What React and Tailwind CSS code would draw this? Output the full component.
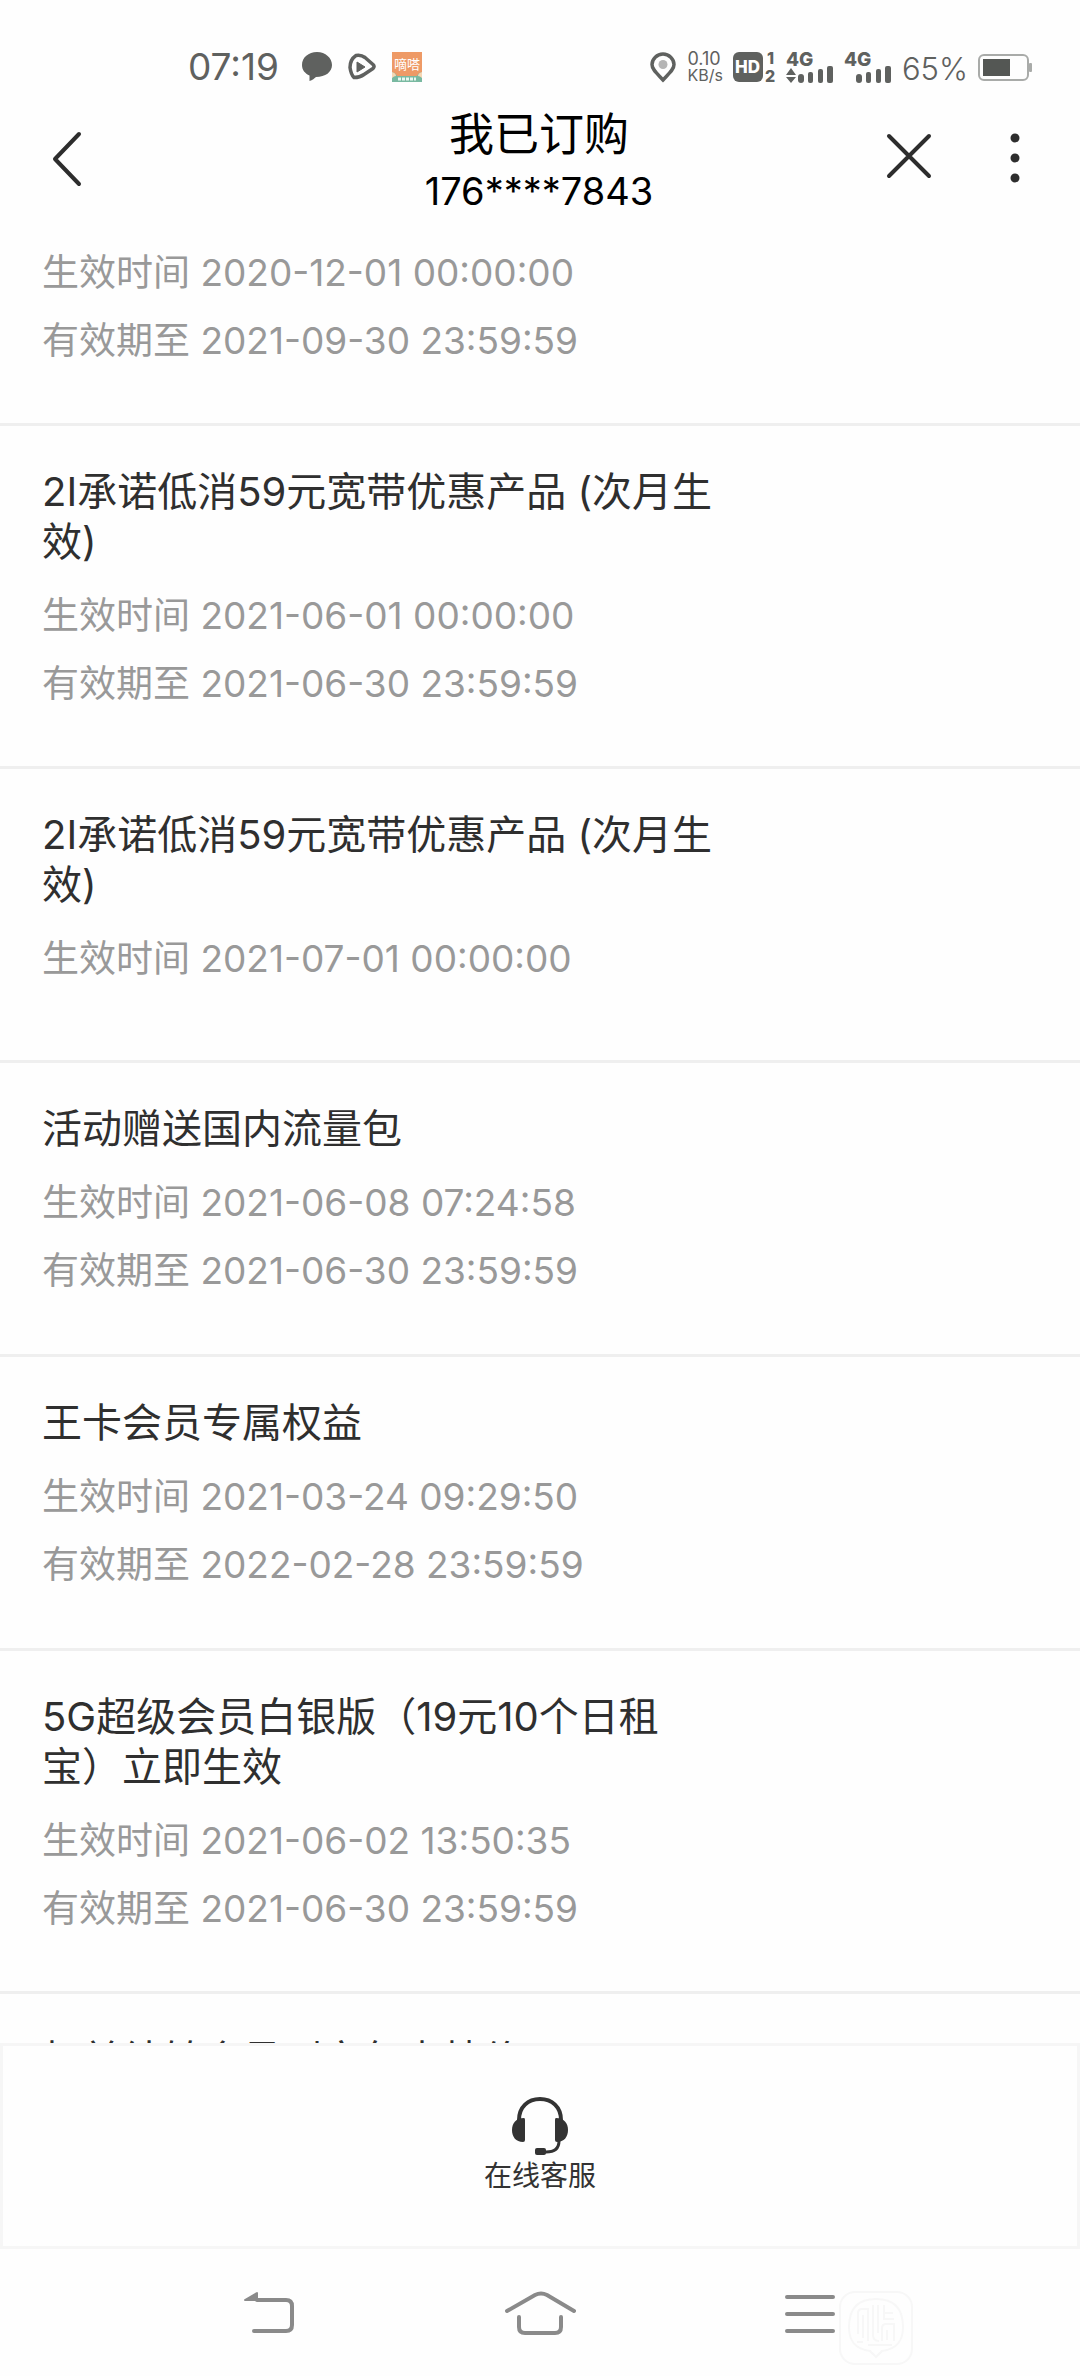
const orders = [
  { start: '2020-12-01 00:00:00', end: '2021-09-30 23:59:59' },
  { title: '2I承诺低消59元宽带优惠产品 (次月生效)', start: '2021-06-01 00:00:00', end: '2021-06-30 23:59:59' },
  { title: '2I承诺低消59元宽带优惠产品 (次月生效)', start: '2021-07-01 00:00:00' },
  { title: '活动赠送国内流量包', start: '2021-06-08 07:24:58', end: '2021-06-30 23:59:59' },
  { title: '王卡会员专属权益', start: '2021-03-24 09:29:50', end: '2022-02-28 23:59:59' },
  { title: '5G超级会员白银版（19元10个日租宝）立即生效', start: '2021-06-02 13:50:35', end: '2021-06-30 23:59:59' },
  { title: '权益结转会员到家包内特价' },
];

const Signal = ({ arrows }) => (
  <svg className="h-8 w-12 overflow-visible" viewBox="0 0 48 32" fill="#5f615f">
    <text x="0" y="15" fontSize="19" fontWeight="800" fontFamily="Inter">4G</text>
    {arrows && <path d="M0 24l5-7 5 7zM0 26l5 6 5-6z" />}
    <rect x="12" y="23" width="6" height="9" rx="3" />
    <rect x="22" y="21" width="5" height="11" rx="2" />
    <rect x="32" y="18" width="5" height="14" rx="2" />
    <rect x="41" y="15" width="6" height="17" rx="2" />
  </svg>
);

const StatusBar = () => (
  <div className="flex h-[102px] shrink-0 items-center justify-between pt-8 pr-12 pl-[188px] text-[#5f615f]">
    <div className="flex items-center gap-[15px]">
      <span className="mr-2 text-[37px] leading-9">07:19</span>
      <svg className="h-[30px] w-[30px]" viewBox="0 0 30 30" fill="#5f615f">
        <path d="M15 0C6.500 0 0 5.500 0 13c0 5 3 8.500 7.500 10.500V29c3-1 5-2.500 6.500-4C23.500 25 30 20 30 13S23.500 0 15 0z" />
      </svg>
      <svg className="h-[30px] w-[30px]" viewBox="0 0 30 30" fill="none" stroke="#5f615f" strokeLinejoin="round">
        <path d="M9 3.500q5-1 9 2l8 7q2 2 0 4l-9 6q-4 3-10 3-3-3-4-10 0-8 6-12z" strokeWidth="3.500" />
        <path d="M10 10v10l8-5z" fill="#5f615f" strokeWidth="1" />
      </svg>
      <svg className="h-[30px] w-[30px] overflow-visible" viewBox="0 0 30 30">
        <rect width="30" height="30" fill="#ee9a66" />
        <path d="M0 20q4 1 5 4h20q1-3 5-4v10H0z" fill="#79b9a1" />
        <path d="M0 20q4 1 4 4-2 0-4 2zM30 20q-4 1-4 4 2 0 4 2z" fill="#f6d7b4" />
        <text x="2" y="17" fontSize="13" fill="#fff" fontFamily="Noto Sans CJK SC">嘀嗒</text>
        <path d="M6 27h18" stroke="#e9f7f0" strokeWidth="3" strokeDasharray="3 1" />
      </svg>
    </div>
    <div className="flex items-center gap-2.5">
      <svg className="h-8 w-7" viewBox="0 0 28 32">
        <path d="M14 3c6 0 11 5 11 10.500 0 5-5 9-11 15.500C8 22.500 3 18.500 3 13.500 3 8 8 3 14 3z" fill="none" stroke="#5f615f" strokeWidth="3.500" />
        <circle cx="14" cy="13.500" r="4.500" fill="#b5b5b5" />
      </svg>
      <div className="flex flex-col text-[18px] leading-4">
        <span>0.10</span>
        <span className="text-[16px]">KB/s</span>
      </div>
      <svg className="h-8 w-[43px] overflow-visible" viewBox="0 0 43 32" fill="#5f615f" fontFamily="Inter" fontWeight="800">
        <rect y="1" width="30" height="30" rx="6" />
        <text x="2" y="22" fontSize="17" fill="#fff">HD</text>
        <text x="34" y="13" fontSize="16">1</text>
        <text x="32" y="31" fontSize="16">2</text>
      </svg>
      <Signal arrows />
      <Signal />
      <span className="pt-1 text-[31px] leading-8 font-light">65%</span>
      <svg className="h-8 w-[54px]" viewBox="0 0 54 32">
        <rect x="1" y="4" width="49" height="25" rx="5" fill="none" stroke="#a9aba9" strokeWidth="2" />
        <rect x="5" y="8" width="27" height="17" fill="#545754" />
        <rect x="51" y="12" width="3" height="9" rx="1" fill="#a9aba9" />
      </svg>
    </div>
  </div>
);

const Header = () => (
  <header className="grid h-[122px] shrink-0 grid-cols-[1fr_auto_1fr] items-center pr-[50px] pl-12">
    <button className="justify-self-start pb-2" aria-label="返回">
      <svg className="h-[58px] w-10" viewBox="0 0 40 58" fill="none" stroke="#2d2d2d" strokeWidth="4" strokeLinecap="round" strokeLinejoin="round">
        <path d="M31 4L7 29l24 25" />
      </svg>
    </button>
    <div className="flex flex-col items-center pb-1 text-black">
      <h1 className="text-[45px] leading-[60px]">我已订购</h1>
      <span className="text-[38px] leading-[52px]">176****7843</span>
    </div>
    <div className="flex items-center justify-self-end pb-2.5">
      <button aria-label="关闭" className="mr-[66px]">
        <svg className="h-[50px] w-[50px]" viewBox="0 0 50 50" fill="none" stroke="#2d2d2d" strokeWidth="4" strokeLinecap="round">
          <path d="M5 3l40 40M45 3L5 43" />
        </svg>
      </button>
      <button aria-label="更多">
        <svg className="h-[50px] w-[30px]" viewBox="0 0 30 50" fill="#2d2d2d">
          <circle cx="15" cy="5" r="4.500" />
          <circle cx="15" cy="25" r="4.500" />
          <circle cx="15" cy="45" r="4.500" />
        </svg>
      </button>
    </div>
  </header>
);

const OrderItem = ({ title, start, end }) => (
  <li className={`border-b-[3px] border-[#efefef] px-[42px] pb-12 ${title ? 'min-h-[294px] pt-[41px]' : 'pt-[15px]'}`}>
    {title && <h2 className="mb-[15px] w-[69%] text-[40px] leading-[50px] text-[#2f2f2f] [text-spacing-trim:space-all]">{title}</h2>}
    {start && <p className="text-[37px] leading-[68px] text-[#999999]">生效时间 {start}</p>}
    {end && <p className="text-[37px] leading-[68px] text-[#999999]">有效期至 {end}</p>}
  </li>
);

const ServicePanel = () => (
  <div className="flex h-[206px] shrink-0 items-center justify-center border-[3px] border-[#f6f6f6]">
    <button className="flex flex-col items-center text-[#333333]">
      <svg className="h-[60px] w-[60px]" viewBox="0 0 60 60" fill="#333">
        <path d="M9 24C9 11 18 3 30 3s21 8 21 21" fill="none" stroke="#333" strokeWidth="4" />
        <path d="M14 22q1 0 1 2v20q0 2-2 2C6 46 2 41 2 34s4-12 12-12zM46 22q-1 0-1 2v20q0 2 2 2c7 0 11-5 11-12s-4-12-12-12z" />
        <path d="M49 45q0 11-13 11h-6" fill="none" stroke="#333" strokeWidth="3" />
        <rect x="25" y="52" width="11" height="7" rx="2" />
      </svg>
      <span className="text-[28px] leading-10">在线客服</span>
    </button>
  </div>
);

const NavBar = () => (
  <nav className="relative flex h-[127px] shrink-0 items-center justify-center">
    <button className="flex w-1/4 justify-center" aria-label="后退">
      <svg className="h-[46px] w-[54px]" viewBox="0 0 54 46" fill="none" stroke="#8a8a8a" strokeWidth="4" strokeLinecap="round">
        <path d="M14 10h29q6 0 6 6v19q0 6-6 6H11" />
        <path d="M2 10l12-7v7z" fill="#8a8a8a" strokeWidth="2" strokeLinejoin="round" />
      </svg>
    </button>
    <button className="flex w-1/4 justify-center" aria-label="主页">
      <svg className="h-[46px] w-[72px]" viewBox="0 0 72 46" fill="none" stroke="#8a8a8a" strokeWidth="4" strokeLinecap="round">
        <path d="M3 21L31 5q6-3 12 0l27 16M15 27v10q0 6 6 6h30q6 0 6-6V27" />
      </svg>
    </button>
    <button className="flex w-1/4 justify-center" aria-label="任务">
      <svg className="h-[46px] w-[52px]" viewBox="0 0 52 46" fill="none" stroke="#8a8a8a" strokeWidth="4" strokeLinecap="round">
        <path d="M3 7h46M3 24h46M3 41h46" />
      </svg>
    </button>
    <svg className="absolute right-[166px] bottom-2.5 h-[76px] w-[76px]" viewBox="0 0 76 76" fill="none" stroke="#f7f7f7" strokeWidth="2">
      <rect x="2" y="2" width="72" height="72" rx="15" />
      <path d="M38 67l-6-6C16 59 11 50 11 37 11 18 20 9 38 9s27 9 27 28c0 13-5 22-21 24z" />
      <path d="M20 44V23q0-4 4-4h6v32M25 48V25M35 15v30q0 6 6 6M40 15v28M46 15v14h10M46 23h9M44 51V38q0-4 4-4h8v17M49 50V40M19 52h6M30 55h24" />
    </svg>
  </nav>
);

const App = () => {
  return (
    <div className="flex h-screen flex-col overflow-hidden bg-[#fefefe] font-[Inter,'Noto_Sans_CJK_SC',sans-serif]">
      <StatusBar />
      <Header />
      <main className="min-h-0 flex-1 overflow-hidden">
        <ul>
          {orders.map((order, i) => (
            <OrderItem key={i} {...order} />
          ))}
        </ul>
      </main>
      <ServicePanel />
      <NavBar />
    </div>
  );
};

export default App;
